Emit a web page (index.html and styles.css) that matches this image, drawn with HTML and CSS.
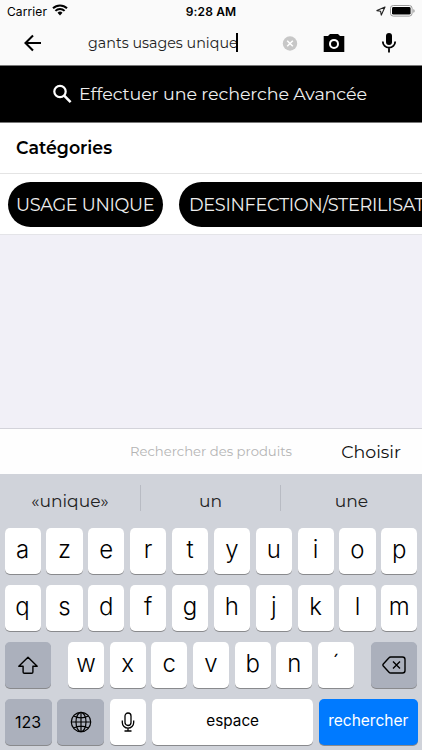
FILE: index.html
```html
<!DOCTYPE html>
<html lang="fr">
<head>
    <meta charset="UTF-8">
    <meta name="viewport" content="width=device-width, initial-scale=1.0">
    <title>Recherche</title>
    <link rel="stylesheet" href="styles.css">
</head>
<body>
    <!-- Status bar -->
    <div class="status-bar">
        <div class="carrier">
            <span>Carrier</span>
            <svg width="16" height="12" viewBox="0 0 16 12">
                <path d="M1 4.3a10 10 0 0 1 14 0M3.4 6.9a6.6 6.6 0 0 1 9.2 0" fill="none" stroke="#000" stroke-width="2"/>
                <path d="M8 11.4L5.5 8.8a3.6 3.6 0 0 1 5 0z"/>
            </svg>
        </div>
        <span class="time">9:28 AM</span>
        <div class="status-right">
            <svg width="10" height="10" viewBox="0 0 10 10">
                <path d="M9 1L.9 4.6l3.7.7.7 3.8z" fill="none" stroke="#222" stroke-width="1.1" stroke-linejoin="round"/>
            </svg>
            <svg width="25" height="12" viewBox="0 0 25 12">
                <rect x=".5" y=".5" width="21.6" height="10.6" rx="2.8" fill="#fff" stroke="#999"/>
                <rect x="2" y="2" width="18.6" height="7.6" rx="1.4"/>
                <path d="M23.3 4v3.8a2 2 0 0 0 0-3.8z" fill="#999"/>
            </svg>
        </div>
    </div>

    <!-- Search header -->
    <header class="search-header">
        <svg class="back-icon" width="24" height="24" viewBox="0 0 24 24">
            <path d="M20 11H5M12 3.5L4.5 11l7.500 7.500" fill="none" stroke="#000" stroke-width="2.1"/>
        </svg>
        <div class="search-input"><span class="search-text">gants usages unique</span><i class="caret"></i></div>
        <svg class="clear-icon" width="16" height="16" viewBox="0 0 16 16">
            <circle cx="8" cy="7.5" r="7.2" fill="#c7c7c7"/>
            <path d="M5.2 4.7l5.600 5.600M10.8 4.7l-5.600 5.600" stroke="#fff" stroke-width="1.5"/>
        </svg>
        <svg class="camera-icon" width="22" height="20" viewBox="0 0 22 20">
            <path d="M.7 2H5L7 0h8l2 2h4.3v16H.7z"/>
            <circle cx="11" cy="9.9" r="4" fill="none" stroke="#fff" stroke-width="2"/>
        </svg>
        <svg class="mic-icon" width="16" height="21" viewBox="0 0 16 21">
            <rect x="5" y="0" width="6" height="12" rx="3"/>
            <path d="M1.8 8.500a6.200 6.200 0 0 0 12.400 0M8 14.500V19.500" fill="none" stroke="#000" stroke-width="1.8"/>
        </svg>
    </header>

    <div class="advanced-search">
        <svg width="20" height="20" viewBox="0 0 20 20">
            <circle cx="7" cy="7.5" r="5.7" fill="none" stroke="#fff" stroke-width="2.2"/>
            <path d="M11.2 11.7l6.400 6.400" stroke="#fff" stroke-width="2.6"/>
        </svg>
        <span class="advanced-label">Effectuer une recherche Avancée</span>
    </div>

    <!-- Categories -->
    <h2 class="categories-title">Catégories</h2>
    <div class="categories">
        <div class="pill">USAGE UNIQUE</div>
        <div class="pill pill-long">DESINFECTION/STERILISATION</div>
    </div>

    <main class="results"></main>

    <div class="toolbar">
        <span class="placeholder">Rechercher des produits</span>
        <span class="choose">Choisir</span>
    </div>

    <!-- Keyboard -->
    <div class="keyboard">
        <div class="suggestions">
            <span>«unique»</span>
            <span>un</span>
            <span>une</span>
        </div>
        <div class="row">
            <div class="key">a</div><div class="key">z</div><div class="key">e</div><div class="key">r</div><div class="key">t</div>
            <div class="key">y</div><div class="key">u</div><div class="key">i</div><div class="key">o</div><div class="key">p</div>
        </div>
        <div class="row">
            <div class="key">q</div><div class="key">s</div><div class="key">d</div><div class="key">f</div><div class="key">g</div>
            <div class="key">h</div><div class="key">j</div><div class="key">k</div><div class="key">l</div><div class="key">m</div>
        </div>
        <div class="row">
            <div class="key dark shift">
                <svg width="22" height="19" viewBox="0 0 22 19">
                    <path d="M11 1.3L1.8 10.3h4.300v5.600q0 1.300 1.300 1.300h7.200q1.300 0 1.300-1.300v-5.600h4.300z" fill="none" stroke="#000" stroke-width="1.4" stroke-linejoin="round"/>
                </svg>
            </div>
            <div class="key">w</div><div class="key">x</div><div class="key">c</div><div class="key">v</div>
            <div class="key">b</div><div class="key">n</div><div class="key">´</div>
            <div class="key dark delete">
                <svg width="24" height="18" viewBox="0 0 24 18">
                    <path d="M8.7 1h11.800q2.500 0 2.500 2.500v11q0 2.500-2.500 2.500H8.700q-1 0-1.700-.8L1.300 10q-.8-1 0-2L7 1.800q.7-.8 1.700-.8z" fill="none" stroke="#000" stroke-width="1.4"/>
                    <path d="M11 5.500l7 7M18 5.500l-7 7" stroke="#000" stroke-width="1.4"/>
                </svg>
            </div>
        </div>
        <div class="row">
            <div class="key dark numbers">123</div>
            <div class="key dark globe">
                <svg width="22" height="22" viewBox="0 0 22 22" fill="none" stroke="#000" stroke-width="1.2">
                    <circle cx="11" cy="11" r="9.7"/>
                    <ellipse cx="11" cy="11" rx="5" ry="9.7"/>
                    <path d="M11 1.300v19.400M1.300 11h19.400M3.600 5Q11 8.800 18.400 5M3.600 17Q11 13.200 18.400 17"/>
                </svg>
            </div>
            <div class="key dictation">
                <svg width="14" height="20" viewBox="0 0 14 20" fill="none" stroke="#000" stroke-width="1.3">
                    <rect x="4" y="1" width="6" height="12.5" rx="3"/>
                    <path d="M1.300 8.500v2a5.700 5.700 0 0 0 11.400 0v-2M7 16.200V19M3.500 19h7"/>
                </svg>
            </div>
            <div class="key space">espace</div>
            <div class="key enter">rechercher</div>
        </div>
    </div>
</body>
</html>
```
FILE: styles.css
```css
* {
    box-sizing: border-box;
}
body {
    margin: 0;
    width: 422px;
    height: 750px;
    overflow: hidden;
    display: flex;
    flex-direction: column;
    background-color: #fff;
    color: #000;
    font-family: Montserrat, Inter, sans-serif;
}
svg {
    display: block;
    flex: none;
}
.status-bar {
    height: 22px;
    padding: 0 7px;
    display: grid;
    grid-template-columns: 1fr auto 1fr;
    align-items: center;
    background-color: #fafafa;
    font-family: Inter, sans-serif;
    font-size: 12px;
}
.carrier {
    display: flex;
    align-items: center;
    gap: 5px;
    letter-spacing: 0.1px;
}
.carrier svg {
    margin-bottom: 2px;
}
.time {
    font-weight: 600;
    letter-spacing: 0.15px;
}
.status-right {
    display: flex;
    justify-content: flex-end;
    align-items: center;
    gap: 4px;
    padding-bottom: 1px;
}
.search-header {
    height: 44px;
    padding-left: 21px;
    display: flex;
    align-items: center;
    background-color: #fafafa;
    border-bottom: 1px solid #777;
}
.search-input {
    margin-left: 43px;
    width: 194px;
    display: flex;
    align-items: center;
    font-size: 14.3px;
    color: #222;
    padding-bottom: 2px;
}
.caret {
    width: 2px;
    height: 19px;
    margin-left: -2px;
    background-color: #000;
}
.camera-icon {
    margin-left: 25px;
}
.mic-icon {
    margin-left: 36px;
}
.advanced-search {
    height: 57px;
    padding-left: 53px;
    display: flex;
    align-items: center;
    gap: 6px;
    background-color: #000;
    border-bottom: 1px solid #777;
    color: #eee;
    font-size: 17.5px;
    letter-spacing: -0.1px;
}
.advanced-label {
    padding-bottom: 2px;
}
.categories-title {
    margin: 0;
    height: 51px;
    padding-left: 16px;
    line-height: 50px;
    font-size: 17.4px;
    font-weight: 600;
    border-bottom: 1px solid #e4e4e4;
}
.categories {
    height: 61px;
    padding: 8px 0 8px 8px;
    display: flex;
    gap: 16px;
    overflow: hidden;
    border-bottom: 1px solid #e4e4e8;
}
.pill {
    flex: none;
    width: 155px;
    height: 45px;
    border-radius: 23px;
    padding-left: 8px;
    line-height: 45px;
    background-color: #000;
    color: #eee;
    font-size: 17.7px;
    letter-spacing: -0.3px;
    white-space: nowrap;
}
.pill-long {
    width: 300px;
    padding-left: 10px;
}
.results {
    height: 193px;
    background-color: #f1f0f7;
}
.toolbar {
    height: 46px;
    padding: 0 21px 1px 0;
    display: grid;
    grid-template-columns: 130px 1fr auto;
    align-items: center;
    background-color: #fefefe;
    border-top: 1px solid #d3d3da;
}
.placeholder {
    grid-column: 2;
    font-size: 13.2px;
    color: #b4b4b4;
}
.choose {
    font-size: 17.4px;
    color: #111;
}
.keyboard {
    height: 276px;
    padding: 0 4.5px;
    background-color: #d0d3da;
}
.suggestions {
    height: 54px;
    margin: 0 -4.5px;
    padding-bottom: 7px;
    display: grid;
    grid-template-columns: 140px 140px 1fr;
    align-items: center;
    text-align: center;
    font-size: 17.1px;
    color: #222;
}
.suggestions span {
    height: 26px;
    line-height: 32px;
}
.suggestions span + span {
    border-left: 1px solid #b8bbc3;
}
.row {
    height: 46px;
    margin-bottom: 11px;
    display: flex;
    justify-content: space-between;
}
.key {
    width: 36.2px;
    height: 46px;
    border-radius: 5px;
    display: flex;
    justify-content: center;
    align-items: center;
    padding-bottom: 3px;
    background-color: #fff;
    box-shadow: 0 1px 0 #898a8d;
    font-family: Inter, sans-serif;
    font-size: 24px;
    font-weight: 350;
}
.key.dark {
    background-color: #abb0bc;
    padding-bottom: 0;
}
.key.shift {
    width: 46px;
    margin-right: 12px;
}
.key.delete {
    width: 46px;
    margin-left: 12px;
}
.key.dictation {
    padding-bottom: 0;
}
.key.numbers {
    width: 47px;
    font-size: 16px;
    font-weight: 400;
}
.key.globe {
    width: 47px;
}
.key.space {
    width: 161px;
    font-size: 15.3px;
    font-weight: 400;
}
.key.enter {
    width: 98.5px;
    background-color: #007aff;
    color: #fff;
    font-size: 15.5px;
    font-weight: 400;
}
```
